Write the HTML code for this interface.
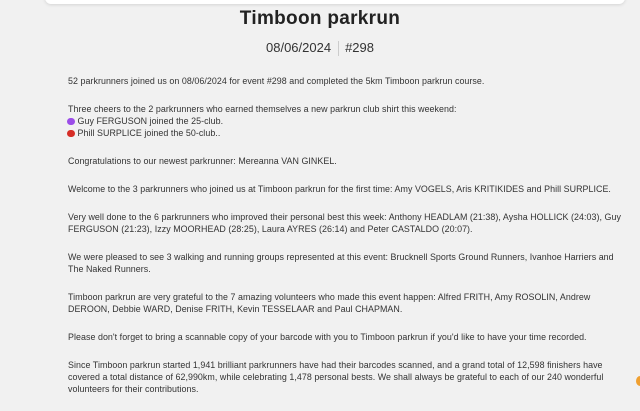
<!DOCTYPE html>
<html><head><meta charset="utf-8"><style>
html,body{margin:0;padding:0;background:#f1f1f1;width:640px;height:400px;overflow:hidden;font-family:"Liberation Sans",sans-serif;color:#2b2b2b}
.top{position:absolute;left:45px;top:-10px;width:580px;height:14px;background:#fff;border-radius:6px;box-shadow:0 1px 3px rgba(0,0,0,.12)}
h1{position:absolute;top:8px;left:0;width:640px;text-align:center;margin:0;font-size:19px;font-weight:bold;color:#222;letter-spacing:0.3px}
.date{position:absolute;top:40px;left:0;width:640px;text-align:center;font-size:13px;color:#333}
.date span.sep{display:inline-block;width:1px;height:15px;background:#ccc;vertical-align:middle;margin:0 6px 0 7px}
.c{position:absolute;left:68px;top:75px;font-size:8.9px;letter-spacing:0.05px;line-height:12px;white-space:nowrap;color:#333}
.c p{margin:0 0 16px 0}
.dot{display:inline-block;width:7.5px;height:7.5px;border-radius:50%;vertical-align:-1px;margin-right:3px;margin-left:-1px}
.o{position:absolute;left:636px;top:376px;width:8px;height:10px;border-radius:50%;background:#f0a030}
</style></head><body>
<div class="top"></div>
<h1>Timboon parkrun</h1>
<div class="date">08/06/2024<span class="sep"></span>#298</div>
<div class="c">
<p>52 parkrunners joined us on 08/06/2024 for event #298 and completed the 5km Timboon parkrun course.</p>
<p>Three cheers to the 2 parkrunners who earned themselves a new parkrun club shirt this weekend:<br><span class="dot" style="background:#9b4de8"></span>Guy FERGUSON joined the 25-club.<br><span class="dot" style="background:#d62d26"></span>Phill SURPLICE joined the 50-club..</p>
<p>Congratulations to our newest parkrunner: Mereanna VAN GINKEL.</p>
<p>Welcome to the 3 parkrunners who joined us at Timboon parkrun for the first time: Amy VOGELS, Aris KRITIKIDES and Phill SURPLICE.</p>
<p>Very well done to the 6 parkrunners who improved their personal best this week: Anthony HEADLAM (21:38), Aysha HOLLICK (24:03), Guy<br>FERGUSON (21:23), Izzy MOORHEAD (28:25), Laura AYRES (26:14) and Peter CASTALDO (20:07).</p>
<p>We were pleased to see 3 walking and running groups represented at this event: Brucknell Sports Ground Runners, Ivanhoe Harriers and<br>The Naked Runners.</p>
<p>Timboon parkrun are very grateful to the 7 amazing volunteers who made this event happen: Alfred FRITH, Amy ROSOLIN, Andrew<br>DEROON, Debbie WARD, Denise FRITH, Kevin TESSELAAR and Paul CHAPMAN.</p>
<p>Please don't forget to bring a scannable copy of your barcode with you to Timboon parkrun if you'd like to have your time recorded.</p>
<p>Since Timboon parkrun started 1,941 brilliant parkrunners have had their barcodes scanned, and a grand total of 12,598 finishers have<br>covered a total distance of 62,990km, while celebrating 1,478 personal bests. We shall always be grateful to each of our 240 wonderful<br>volunteers for their contributions.</p>
</div>
<div class="o"></div>
</body></html>
